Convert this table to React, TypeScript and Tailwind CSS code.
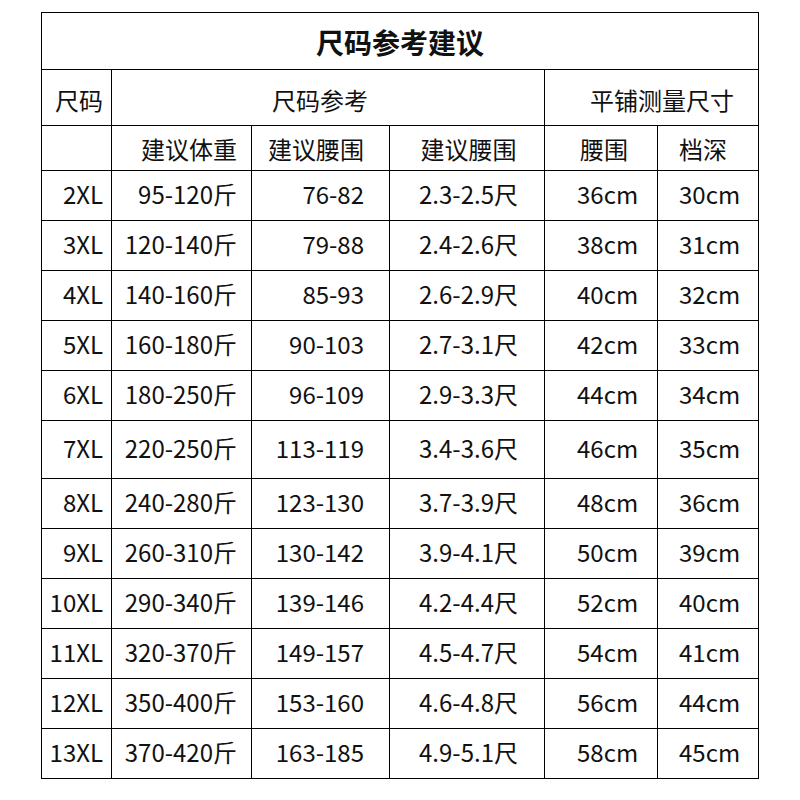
import React from 'react';

type Row = [string, string, string, string, string, string];

const rows: Row[] = [
  ['2XL', '95-120斤', '76-82', '2.3-2.5尺', '36cm', '30cm'],
  ['3XL', '120-140斤', '79-88', '2.4-2.6尺', '38cm', '31cm'],
  ['4XL', '140-160斤', '85-93', '2.6-2.9尺', '40cm', '32cm'],
  ['5XL', '160-180斤', '90-103', '2.7-3.1尺', '42cm', '33cm'],
  ['6XL', '180-250斤', '96-109', '2.9-3.3尺', '44cm', '34cm'],
  ['7XL', '220-250斤', '113-119', '3.4-3.6尺', '46cm', '35cm'],
  ['8XL', '240-280斤', '123-130', '3.7-3.9尺', '48cm', '36cm'],
  ['9XL', '260-310斤', '130-142', '3.9-4.1尺', '50cm', '39cm'],
  ['10XL', '290-340斤', '139-146', '4.2-4.4尺', '52cm', '40cm'],
  ['11XL', '320-370斤', '149-157', '4.5-4.7尺', '54cm', '41cm'],
  ['12XL', '350-400斤', '153-160', '4.6-4.8尺', '56cm', '44cm'],
  ['13XL', '370-420斤', '163-185', '4.9-5.1尺', '58cm', '45cm'],
];

// per-column alignment of the body cells
const colClass = [
  'justify-end pr-[8px]',
  'justify-end pr-[14px]',
  'justify-end pr-[25px]',
  'justify-center pl-[3px]',
  'justify-start pl-[32px]',
  'justify-start pl-[21px]',
];

const cell = 'flex items-center bg-white leading-none';

export default function App() {
  return (
    <div
      className="min-h-[800px] bg-white pt-[12px] pl-[41px] text-[24px] text-[#111]"
      style={{ fontFamily: '"Noto Sans CJK SC", "Noto Sans", sans-serif' }}
    >
      <div className="grid w-[718px] grid-cols-[69px_139px_137px_154px_112px_100px] grid-rows-[56px_55px_44px_repeat(5,49px)_57px_repeat(6,49px)] gap-px bg-black p-px">
        {/* Title */}
        <div className={`${cell} col-span-6 justify-center pt-[2px] text-[28px] font-bold`}>
          尺码参考建议
        </div>

        {/* Header */}
        <div className={`${cell} justify-end pr-[8px] pt-[4px]`}>尺码</div>
        <div className={`${cell} col-span-3 pl-[160px] pt-[4px]`}>尺码参考</div>
        <div className={`${cell} col-span-2 pl-[45px] pt-[4px]`}>平铺测量尺寸</div>

        {/* Sub header */}
        <div className={cell}></div>
        <div className={`${cell} justify-end pr-[14px] pt-[1px]`}>建议体重</div>
        <div className={`${cell} justify-end pr-[25px] pt-[1px]`}>建议腰围</div>
        <div className={`${cell} justify-center pl-[3px] pt-[1px]`}>建议腰围</div>
        <div className={`${cell} pl-[35px] pt-[1px]`}>腰围</div>
        <div className={`${cell} pl-[21px] pt-[1px]`}>档深</div>

        {/* Body */}
        {rows.map((r) =>
          r.map((v, i) => (
            <div key={`${r[0]}-${i}`} className={`${cell} ${colClass[i]} pb-[4px]`}>
              {v}
            </div>
          ))
        )}
      </div>
    </div>
  );
}
